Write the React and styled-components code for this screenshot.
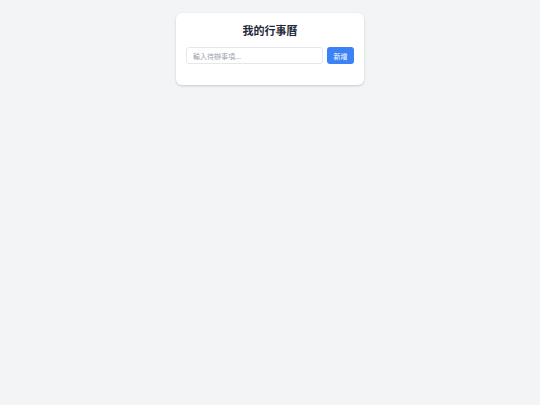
import React, { useState } from "react";
import styled, { createGlobalStyle } from "styled-components";

const Global = createGlobalStyle`
  html, body { margin: 0; padding: 0; background: #f3f4f6; }
  body { font-family: "Noto Sans CJK TC", "Noto Sans", sans-serif; }
  * { box-sizing: border-box; }
`;

const Page = styled.div`
  min-height: 405px;
  display: flex;
  justify-content: center;
  align-items: flex-start;
  padding-top: 13px;
`;

const Card = styled.div`
  width: 188px;
  background: #ffffff;
  border-radius: 6px;
  box-shadow: 0 1px 3px rgba(0, 0, 0, 0.12), 0 1px 2px rgba(0, 0, 0, 0.06);
  padding: 10px 10px 21px;
`;

const Title = styled.h1`
  margin: 0 0 10px;
  font-size: 11px;
  line-height: 14px;
  font-weight: 700;
  color: #1f2937;
  text-align: center;
`;

const Row = styled.div`
  display: flex;
  gap: 4px;
`;

const Input = styled.input`
  flex: 1;
  min-width: 0;
  height: 17px;
  border: 1px solid #e5e7eb;
  border-radius: 3px;
  padding: 0 6px;
  font-size: 7px;
  font-family: inherit;
  color: #374151;
  outline: none;
  &::placeholder { color: #9ca3af; }
`;

const Button = styled.button`
  width: 27px;
  height: 17px;
  border: none;
  border-radius: 3px;
  background: #3b82f6;
  color: #ffffff;
  font-size: 7px;
  font-family: inherit;
  padding: 0;
  cursor: pointer;
`;

export default function App() {
  const [text, setText] = useState("");
  return (
    <>
      <Global />
      <Page>
        <Card>
          <Title>我的行事曆</Title>
          <Row>
            <Input
              value={text}
              onChange={(e) => setText(e.target.value)}
              placeholder="輸入待辦事項..."
            />
            <Button>新增</Button>
          </Row>
        </Card>
      </Page>
    </>
  );
}
